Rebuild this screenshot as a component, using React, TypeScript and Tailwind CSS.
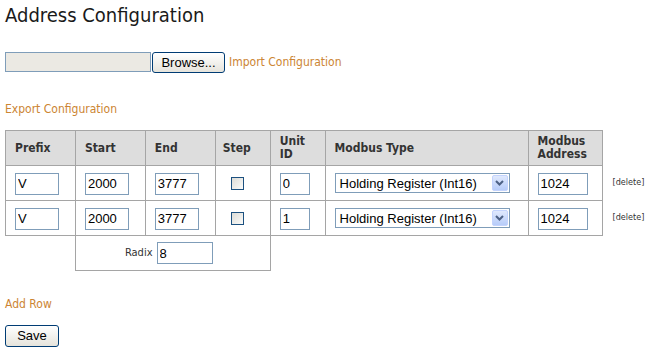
import React from "react";

const rows = [
  { prefix: "V", start: "2000", end: "3777", unit: "0", type: "Holding Register (Int16)", addr: "1024" },
  { prefix: "V", start: "2000", end: "3777", unit: "1", type: "Holding Register (Int16)", addr: "1024" },
];

const Field = ({ value, w }: { value: string; w: string }) => (
  <input
    defaultValue={value}
    className={`${w} h-[22px] border border-[#7f9db9] bg-white px-[2px] text-[13px] text-black font-['Liberation_Sans',sans-serif] outline-none`}
  />
);

const Check = () => (
  <span className="block w-[13px] h-[13px] border border-[#1c5180] bg-gradient-to-br from-[#dcdcd7] to-[#fbfbf9]" />
);

const TypeSelect = ({ value }: { value: string }) => (
  <div className="flex items-center w-[175px] h-[20px] border border-[#7f9db9] bg-white pl-[4px] pr-[1px]">
    <span className="flex-1 text-[13px] text-black font-['Liberation_Sans',sans-serif] leading-none">{value}</span>
    <span className="flex items-center justify-center w-[16px] h-[16px] rounded-[2px] border border-[#c3d3fd] bg-gradient-to-b from-[#e0e9fd] to-[#b7ccf9]">
      <svg width="9" height="6" viewBox="0 0 9 6">
        <path d="M1 1l3.5 3.5L8 1" fill="none" stroke="#4d6185" strokeWidth="2" />
      </svg>
    </span>
  </div>
);

const cell = "border border-[#a5a5a5] pl-[9px] pr-[4px] align-middle";
const head = `${cell} bg-[#dddddd] text-left text-[12px] font-bold leading-[13px] text-[#333]`;

export default function App() {
  return (
    <div className="min-h-[354px] bg-white pl-[5px] text-[#222] font-['DejaVu_Sans_Condensed','DejaVu_Sans',sans-serif] [font-stretch:condensed]">
      <h1 className="pt-[3px] text-[20px] leading-[24px] font-normal text-[#1a1a1a]">Address Configuration</h1>

      <div className="mt-[24px] flex items-center h-[22px]">
        <div className="w-[146px] h-[20px] border border-[#7f9db9] bg-[#ebe9e3]" />
        <button className="ml-[1px] w-[73px] h-[21px] rounded-[3px] border border-[#003c74] bg-gradient-to-b from-white to-[#e6e4dc] text-[13px] text-black font-['Liberation_Sans',sans-serif]">
          Browse...
        </button>
        <a href="#" className="ml-[4px] text-[12px] text-[#cc8533]">Import Configuration</a>
      </div>

      <div className="mt-[28px] text-[12px] leading-[16px]">
        <a href="#" className="text-[#cc8533]">Export Configuration</a>
      </div>

      <table className="mt-[13px] border-collapse table-fixed">
        <colgroup>
          <col className="w-[70px]" />
          <col className="w-[70px]" />
          <col className="w-[70px]" />
          <col className="w-[55px]" />
          <col className="w-[55px]" />
          <col className="w-[203px]" />
          <col className="w-[75px]" />
          <col className="w-[44px]" />
        </colgroup>
        <thead>
          <tr className="h-[35px]">
            <th className={head}>Prefix</th>
            <th className={head}>Start</th>
            <th className={head}>End</th>
            <th className={`${head} !pl-[7px]`}>Step</th>
            <th className={head}>Unit<br />ID</th>
            <th className={head}>Modbus Type</th>
            <th className={head}>Modbus<br />Address</th>
            <th />
          </tr>
        </thead>
        <tbody>
          {rows.map((r, i) => (
            <tr key={i} className="h-[35px]">
              <td className={cell}><Field value={r.prefix} w="w-[44px]" /></td>
              <td className={cell}><Field value={r.start} w="w-[44px]" /></td>
              <td className={cell}><Field value={r.end} w="w-[44px]" /></td>
              <td className={`${cell} !pl-[15px]`}><Check /></td>
              <td className={cell}><Field value={r.unit} w="w-[30px]" /></td>
              <td className={cell}><TypeSelect value={r.type} /></td>
              <td className={cell}><Field value={r.addr} w="w-[50px]" /></td>
              <td className="pl-[9px] align-middle text-[9px] text-[#333] whitespace-nowrap">[delete]</td>
            </tr>
          ))}
          <tr className="h-[35px]">
            <td />
            <td colSpan={3} className="border border-[#a5a5a5] pl-[49px] align-middle">
              <div className="flex items-center gap-[4px]">
                <span className="text-[11px] text-[#333]">Radix</span>
                <Field value="8" w="w-[56px]" />
              </div>
            </td>
            <td colSpan={4} />
          </tr>
        </tbody>
      </table>

      <div className="mt-[25px] text-[12px] leading-[16px]">
        <a href="#" className="text-[#cc8533]">Add Row</a>
      </div>

      <button className="mt-[13px] w-[54px] h-[22px] rounded-[3px] border border-[#003c74] bg-gradient-to-b from-white to-[#e6e4dc] text-[13px] text-black font-['Liberation_Sans',sans-serif]">
        Save
      </button>
    </div>
  );
}
